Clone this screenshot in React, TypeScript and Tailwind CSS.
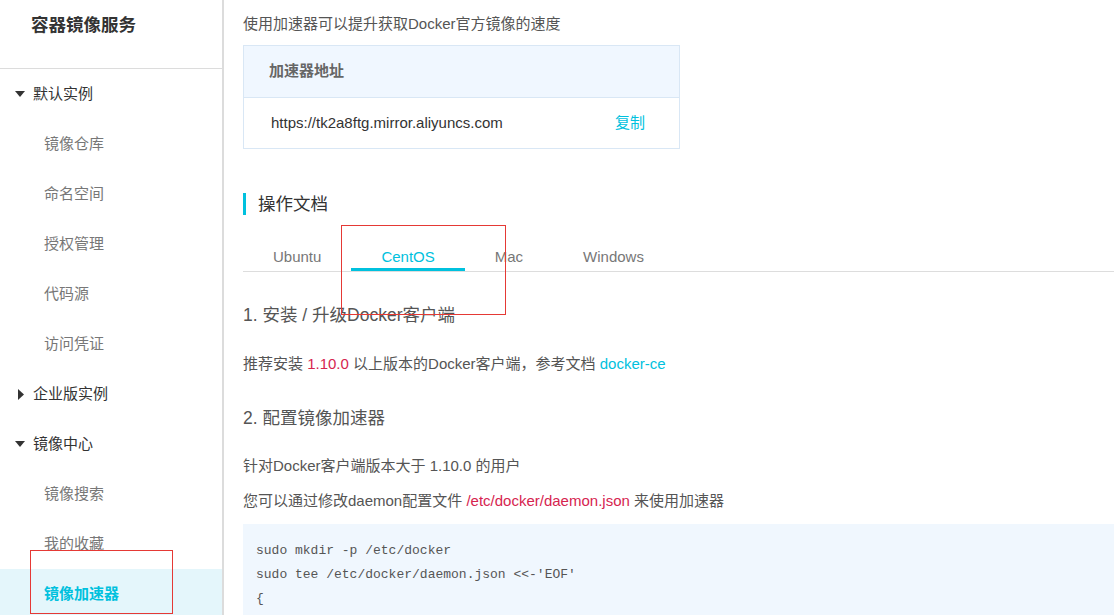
import React from 'react';

const FONT = '"Liberation Sans", "Noto Sans CJK SC", sans-serif';
const MONO = '"Liberation Mono", "Noto Sans CJK SC", monospace';

type MenuItem = { label: string; level: 0 | 1; open?: boolean; active?: boolean };

const menu: MenuItem[] = [
  { label: '默认实例', level: 0, open: true },
  { label: '镜像仓库', level: 1 },
  { label: '命名空间', level: 1 },
  { label: '授权管理', level: 1 },
  { label: '代码源', level: 1 },
  { label: '访问凭证', level: 1 },
  { label: '企业版实例', level: 0, open: false },
  { label: '镜像中心', level: 0, open: true },
  { label: '镜像搜索', level: 1 },
  { label: '我的收藏', level: 1 },
  { label: '镜像加速器', level: 1, active: true },
];

const tabs = ['Ubuntu', 'CentOS', 'Mac', 'Windows'];

function Caret({ open }: { open: boolean }) {
  return open ? (
    <svg width="10" height="6" viewBox="0 0 10 6" className="ml-[15px] mr-[8px]">
      <path d="M0 0h10L5 6z" fill="#333" />
    </svg>
  ) : (
    <svg width="6" height="11" viewBox="0 0 6 11" className="ml-[18px] mr-[9px]">
      <path d="M0 0l6 5.5L0 11z" fill="#333" />
    </svg>
  );
}

function Sidebar() {
  return (
    <aside className="w-[224px] shrink-0 border-r-2 border-[#dcdcdc]">
      <div className="h-[69px] border-b border-[#dcdcdc] pl-[31px] pt-[13px]">
        <h1 className="text-[17.5px] font-bold leading-[24px] text-[#333]">容器镜像服务</h1>
      </div>
      <nav>
        {menu.map((m) =>
          m.level === 0 ? (
            <div key={m.label} className="flex h-[50px] items-center text-[15px] text-[#333]">
              <Caret open={!!m.open} />
              <span>{m.label}</span>
            </div>
          ) : (
            <div
              key={m.label}
              className={
                m.active
                  ? 'flex h-[50px] items-center bg-[#e4f6fb] pl-[44px] text-[15px] font-bold text-[#00c1de]'
                  : 'flex h-[50px] items-center pl-[44px] text-[15px] text-[#777]'
              }
            >
              {m.label}
            </div>
          )
        )}
      </nav>
    </aside>
  );
}

function AddressTable() {
  return (
    <div className="mt-[11px] w-[437px] border border-[#d9e7f5]">
      <div className="flex h-[51px] items-center bg-[#f0f7ff] pl-[25px] text-[15px] font-bold text-[#666]">
        加速器地址
      </div>
      <div className="flex h-[51px] items-center justify-between border-t border-[#d9e7f5] pl-[27px] pr-[34px] text-[15px]">
        <span className="text-[#333]">https://tk2a8ftg.mirror.aliyuncs.com</span>
        <span className="text-[#00c1de]">复制</span>
      </div>
    </div>
  );
}

function Tabs() {
  return (
    <div className="mt-[25px] flex h-[32px] border-b border-[#dddddd]">
      {tabs.map((t) => {
        const active = t === 'CentOS';
        return (
          <div
            key={t}
            className={
              active
                ? 'relative px-[30px] pt-[8px] text-[15px] leading-[18px] text-[#00c1de]'
                : 'relative px-[30px] pt-[8px] text-[15px] leading-[18px] text-[#777]'
            }
          >
            {t}
            {active && <div className="absolute bottom-0 left-0 right-0 h-[3px] bg-[#00c1de]" />}
          </div>
        );
      })}
    </div>
  );
}

export default function App() {
  return (
    <div
      className="relative flex h-[615px] w-[1114px] overflow-hidden bg-white"
      style={{ fontFamily: FONT }}
    >
      <Sidebar />

      <main className="min-w-0 flex-1 pl-[19px] pt-[14px] text-[15px] text-[#555]">
        <p className="leading-[20px]">使用加速器可以提升获取Docker官方镜像的速度</p>

        <AddressTable />

        <div className="mt-[44px] flex h-[22px] items-center border-l-[3px] border-[#00c1de] pl-[12px]">
          <h2 className="text-[17.5px] text-[#333]">操作文档</h2>
        </div>

        <Tabs />

        <h3 className="mt-[31px] text-[17.5px] leading-[24px] text-[#555]">1. 安装 / 升级Docker客户端</h3>
        <p className="mt-[27px] leading-[20px]">
          推荐安装 <span className="text-[#d6244f]">1.10.0</span> 以上版本的Docker客户端，参考文档{' '}
          <span className="text-[#00c1de]">docker-ce</span>
        </p>

        <h3 className="mt-[32px] text-[17.5px] leading-[24px] text-[#555]">2. 配置镜像加速器</h3>
        <p className="mt-[26px] leading-[20px]">针对Docker客户端版本大于 1.10.0 的用户</p>
        <p className="mt-[15px] leading-[20px]">
          您可以通过修改daemon配置文件 <span className="text-[#d6244f]">/etc/docker/daemon.json</span> 来使用加速器
        </p>

        <pre
          className="mt-[13px] h-[120px] bg-[#f0f7fe] px-[13px] pt-[15px] text-[13px] leading-[24px] text-[#555]"
          style={{ fontFamily: MONO }}
        >
          {"sudo mkdir -p /etc/docker\nsudo tee /etc/docker/daemon.json <<-'EOF'\n{"}
        </pre>
      </main>

      {/* red annotation boxes drawn over the screenshot */}
      <div className="pointer-events-none absolute left-[30px] top-[550px] h-[64px] w-[143px] border border-[#e53935]" />
      <div className="pointer-events-none absolute left-[341px] top-[225px] h-[90px] w-[165px] border border-[#e53935]" />
    </div>
  );
}
